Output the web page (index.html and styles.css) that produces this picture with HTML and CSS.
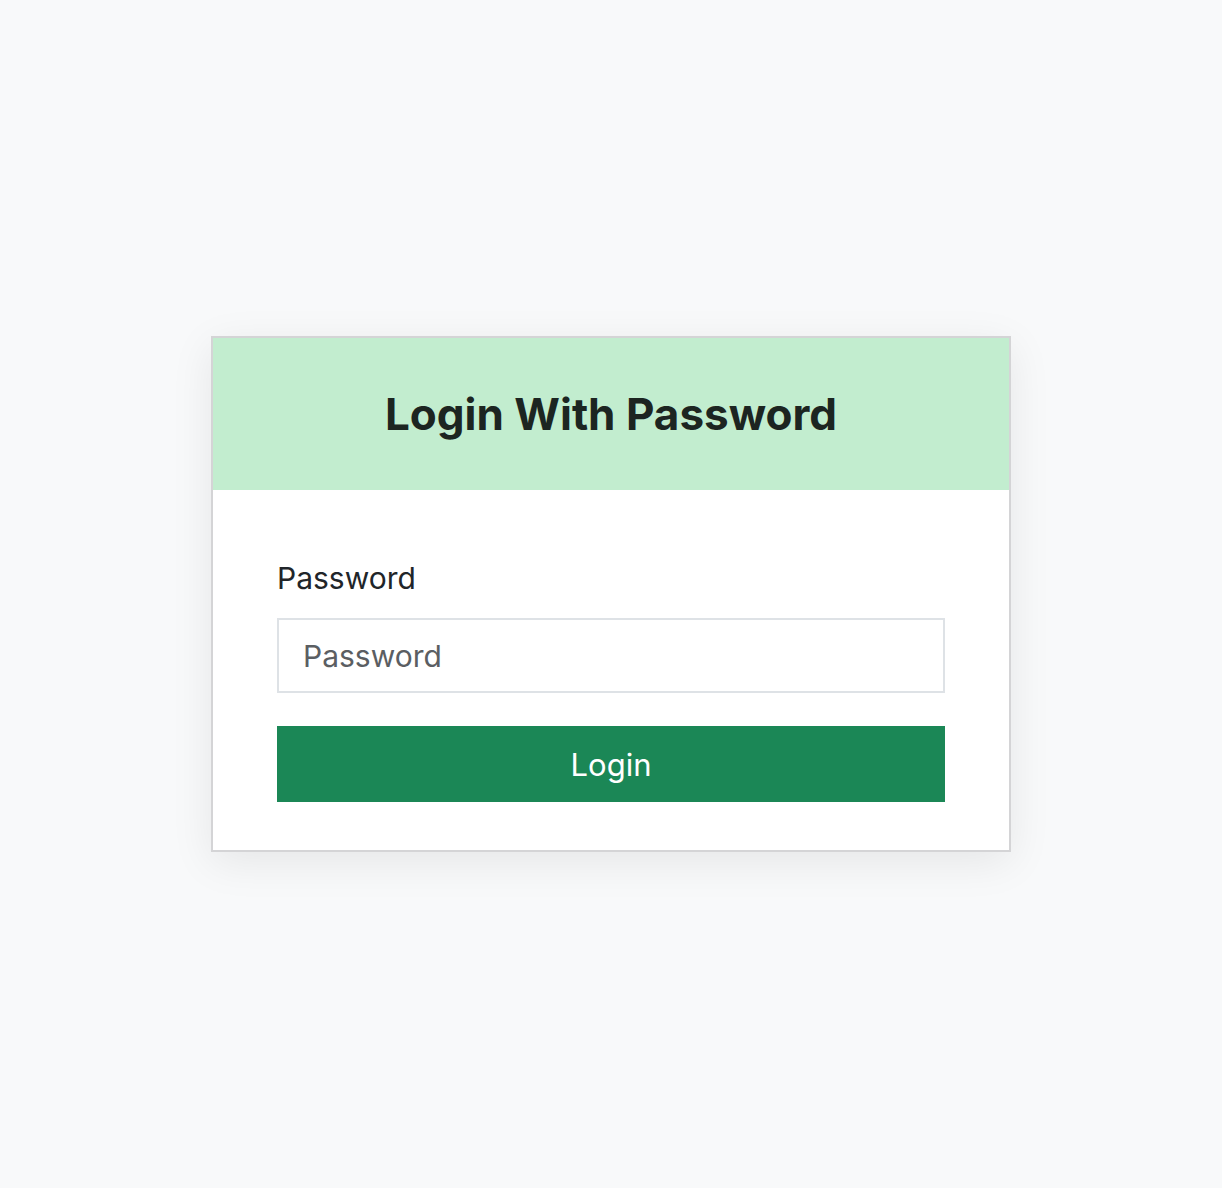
FILE: index.html
```html
<!DOCTYPE html>
<html lang="en">
<head>
    <meta charset="UTF-8">
    <title>Login With Password</title>
    <link rel="stylesheet" href="styles.css">
</head>
<body>
<div class="login-card">
    <div class="login-header">
        <h1>Login With Password</h1>
    </div>
    <form class="login-body" onsubmit="return false">
        <label for="password">Password</label>
        <input id="password" type="password" placeholder="Password"/>
        <button type="submit">Login</button>
    </form>
</div>
</body>
</html>
```

FILE: styles.css
```css
html, body {
    height: 100%;
}

body {
    margin: 0;
    background: #f8f9fa;
    font-family: Inter, "Noto Sans", sans-serif;
    color: #212529;
    display: flex;
    align-items: center;
    justify-content: center;
}

.login-card {
    width: 800px;
    box-sizing: border-box;
    background: #fff;
    border: 2px solid #d4d4d6;
    box-shadow: 0 10px 40px rgba(0, 0, 0, 0.08);
}

.login-header {
    background: #c2edcf;
    height: 152px;
    display: flex;
    align-items: center;
    justify-content: center;
}

.login-header h1 {
    margin: 0;
    font-size: 44px;
    font-weight: 700;
    color: #1c2521;
}

.login-body {
    margin: 0;
    padding: 70px 64px 48px;
    display: flex;
    flex-direction: column;
}

.login-body label {
    font-size: 30px;
    line-height: 36px;
    margin-bottom: 22px;
}

.login-body input {
    height: 75px;
    box-sizing: border-box;
    border: 2px solid #dee2e6;
    padding: 0 24px;
    font-family: inherit;
    font-size: 30px;
    color: #212529;
    outline: none;
}

.login-body input::placeholder {
    color: #5b5e62;
}

.login-body button {
    margin-top: 33px;
    height: 76px;
    border: none;
    background: #1b8756;
    color: #fff;
    font-family: inherit;
    font-size: 31px;
    cursor: pointer;
}
```
